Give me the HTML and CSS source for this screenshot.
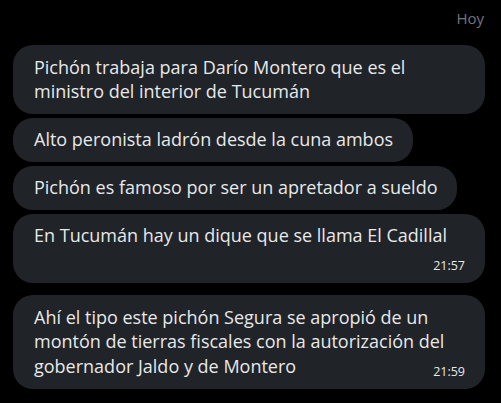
FILE: index.html
```html
<!DOCTYPE html>
<html lang="es">
<head>
    <meta charset="UTF-8">
    <meta name="viewport" content="width=device-width, initial-scale=1.0">
    <title>Mensajes</title>
    <link rel="stylesheet" href="styles.css">
</head>
<body>
    <div class="chat">
        <div class="day">Hoy</div>

        <div class="group">
            <div class="bubble">Pichón trabaja para Darío Montero que es el ministro del interior de Tucumán</div>
            <div class="bubble">Alto peronista ladrón desde la cuna ambos</div>
            <div class="bubble">Pichón es famoso por ser un apretador a sueldo</div>
            <div class="bubble">En Tucumán hay un dique que se llama El Cadillal<span class="time">21:57</span></div>
        </div>

        <div class="group">
            <div class="bubble">Ahí el tipo este pichón Segura se apropió de un montón de tierras fiscales con la autorización del gobernador Jaldo y de Montero<span class="time">21:59</span></div>
        </div>
    </div>
</body>
</html>
```
FILE: styles.css
```css
body {
    margin: 0;
    background-color: #000;
    font-family: "Open Sans", "Noto Sans", Arial, sans-serif;
    color: #e7e9ea;
}
.chat {
    padding: 8px 16px 0 13px;
    display: flex;
    flex-direction: column;
    gap: 12px;
}
.day {
    text-align: right;
    font-size: 15px;
    line-height: 20px;
    color: #71767b;
    padding-right: 1px;
    margin-bottom: 5px;
}
.group {
    display: flex;
    flex-direction: column;
    align-items: flex-start;
    gap: 4px;
}
.bubble {
    display: flow-root;
    background-color: #202327;
    border-radius: 20px;
    padding: 9.75px 20px 9.75px 21px;
    font-size: 18px;
    line-height: 24.5px;
}
.time {
    float: right;
    margin-left: 14px;
    padding-top: 10.5px;
    font-size: 12.5px;
    line-height: 15px;
    color: #e7e9ea;
}
```
